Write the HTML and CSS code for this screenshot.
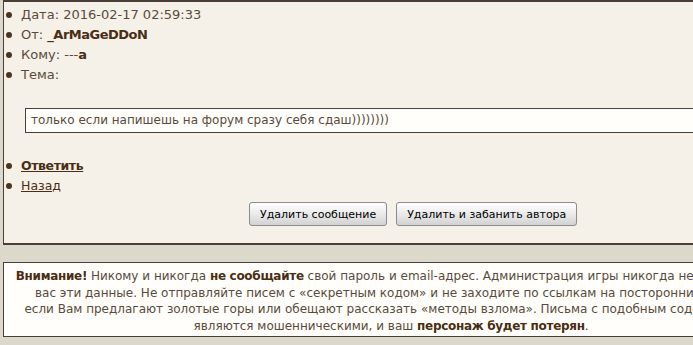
FILE: index.html
```html
<!DOCTYPE html>
<html lang="ru">
<head>
<meta charset="UTF-8">
<title>Сообщение</title>
<link rel="stylesheet" href="styles.css">
</head>
<body>

<div class="panel">
<ul class="info">
<li>Дата: 2016-02-17 02:59:33</li>
<li>От: <b>_ArMaGeDDoN</b></li>
<li>Кому: ---<b>a</b></li>
<li>Тема:</li>
</ul>

<div class="msg">только если напишешь на форум сразу себя сдаш))))))))</div>

<ul class="links">
<li><a href="#" class="strong">Ответить</a></li>
<li><a href="#">Назад</a></li>
</ul>

<div class="actions">
<button class="btn">Удалить сообщение</button>
<button class="btn">Удалить и забанить автора</button>
</div>
</div>

<div class="warning">
<b>Внимание!</b> Никому и никогда <b>не сообщайте</b> свой пароль и email-адрес. Администрация игры никогда не запросит у<br>
вас эти данные. Не отправляйте писем с «секретным кодом» и не заходите по ссылкам на посторонние сайты,<br>
если Вам предлагают золотые горы или обещают рассказать «методы взлома». Письма с подобным содержанием<br>
являются мошенническими, и ваш <b>персонаж будет потерян</b>.
</div>

</body>
</html>
```

FILE: styles.css
```css
* {
margin: 0;
padding: 0;
box-sizing: border-box;
}
body, html {
width: 100%;
height: 100%;
overflow: hidden;
}
body {
background: #dcd8cc;
font-family: "DejaVu Sans", Verdana, sans-serif;
font-size: 13px;
color: #5a4a3c;
}
b {
color: #4a2e14;
letter-spacing: -0.5px;
}

.panel {
margin-left: 3px;
width: 790px;
background: #f5f1e8;
border-top: 2px solid #4a3e36;
border-left: 1px solid #4a3e36;
border-bottom: 2px solid #4a3e36;
padding: 3px 0 17px 0;
}

.info, .links {
list-style: none;
}
.info li, .links li {
position: relative;
padding-left: 17px;
line-height: 20px;
}
.info li::before, .links li::before {
content: "";
position: absolute;
left: 2px;
top: 7px;
width: 6px;
height: 6px;
border-radius: 50%;
background: #4a3520;
}

.msg {
margin: 23px 0 0 21px;
height: 25px;
border: 1px solid #4a3e36;
background: #fffefa;
padding: 3px 5px;
line-height: 17px;
font-size: 12px;
}

.links {
margin-top: 23px;
}
.links a {
color: #4a2e14;
text-decoration: underline;
font-size: 12.5px;
}
.links a.strong {
font-weight: bold;
letter-spacing: -0.4px;
}

.actions {
display: flex;
gap: 9px;
padding-left: 245px;
margin-top: 6px;
}
.btn {
height: 24px;
padding: 0 10px;
border: 1px solid #8c8c8c;
border-radius: 3px;
background: linear-gradient(#ffffff, #e8e8e8 55%, #d2d2d2);
font-family: "DejaVu Sans", Tahoma, sans-serif;
font-size: 11px;
color: #000;
}

.warning {
margin: 17px 0 0 3px;
width: 776px;
background: #fffefa;
border: 1px solid #4a3e36;
padding: 5px 0 2px;
text-align: center;
font-size: 12px;
line-height: 16.5px;
white-space: nowrap;
}
.warning b {
letter-spacing: -0.3px;
}
```
